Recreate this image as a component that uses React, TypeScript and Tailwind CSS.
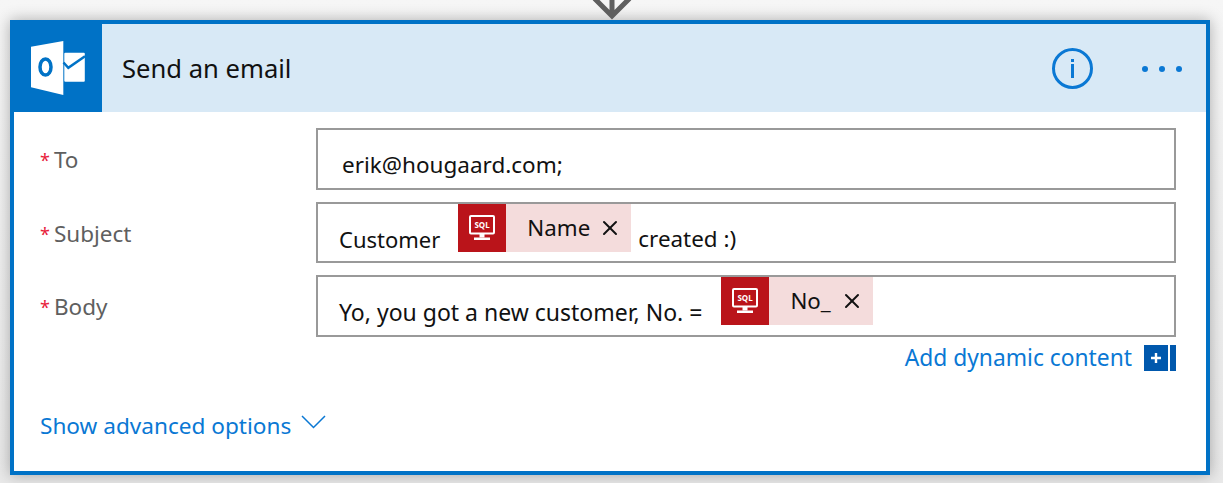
import { X } from "lucide-react";

const font = "font-['Noto_Sans','Open_Sans',sans-serif]";

function SqlIcon() {
  return (
    <div className="w-12 h-12 bg-[#ba141a] flex items-center justify-center shrink-0">
      <svg width="28" height="26" viewBox="0 0 28 26" fill="none">
        <rect x="2" y="1" width="24" height="17.5" rx="1" stroke="white" strokeWidth="2" />
        <text x="14" y="13" textAnchor="middle" fontSize="8" fontWeight="700" fill="white" fontFamily="Noto Sans">SQL</text>
        <rect x="11.5" y="19" width="5" height="3.5" fill="white" />
        <rect x="6" y="22.5" width="16" height="2.5" fill="white" />
      </svg>
    </div>
  );
}

function Token({ label, width }: { label: string; width: string }) {
  return (
    <span className={`inline-flex items-center h-12 bg-[#f4dcdc] ${width}`}>
      <SqlIcon />
      <span className="pl-[21px] text-[22.3px] text-[#111]">{label}</span>
      <X className="ml-auto mr-[9px] w-6 h-6 text-[#111]" strokeWidth={2} />
    </span>
  );
}

function Label({ text }: { text: string }) {
  return (
    <div className="w-[302px] shrink-0 pl-[26px] pt-[16px] flex text-[22.5px] leading-[32px] text-[#5f5f5f]">
      <span className="text-[#e8213a] text-[18px] mr-[4px]">*</span>
      {text}
    </div>
  );
}

export default function App() {
  return (
    <div className={`w-[1223px] h-[483px] overflow-hidden bg-gradient-to-b from-[#f6f6f6] to-[#e9e9e9] ${font}`}>
      <div className="h-5 flex justify-center">
        <svg width="44" height="20" viewBox="0 0 44 20" fill="none">
          <path d="M22 -2V16M4.5 -1.5L22 16L39.5 -1.5" stroke="#5f5f5f" strokeWidth="5" />
        </svg>
      </div>
      <div className="mx-[10px] w-[1200px] h-[455px] border-4 border-[#0072c6] bg-white shadow-[0_0_14px_rgba(0,0,0,0.3)] flex flex-col">
        {/* Header */}
        <div className="h-[88px] flex items-center bg-[#d8e9f6] shrink-0">
          <div className="w-[88px] h-[88px] bg-[#0072c6] flex items-center justify-center">
            <svg width="54" height="54" viewBox="0 0 54 54">
              <path d="M0 5.7L32.3 0V54L0 46.3Z" fill="white" />
              <ellipse cx="14.5" cy="26" rx="5.5" ry="8" fill="none" stroke="#0072c6" strokeWidth="3.5" />
              <rect x="33.3" y="11.7" width="20.5" height="29" rx="1" fill="white" />
              <path d="M32.5 21.5L37.3 26.8L54 15.2" fill="none" stroke="#0072c6" strokeWidth="2.5" />
            </svg>
          </div>
          <div className="ml-5 text-[25.6px] text-[#111] pt-[3px]">Send an email</div>
          <div className="ml-auto mr-[49px] w-[41px] h-[41px] rounded-full border-[3px] border-[#0a78d4] flex items-center justify-center">
            <div className="flex flex-col items-center gap-[2px]">
              <div className="w-[3px] h-[3px] bg-[#0a78d4]" />
              <div className="w-[3px] h-[14px] bg-[#0a78d4]" />
            </div>
          </div>
          <div className="mr-[24px] mt-[1px] flex gap-[11px]">
            <div className="w-[6px] h-[6px] rounded-full bg-[#0a78d4]" />
            <div className="w-[6px] h-[6px] rounded-full bg-[#0a78d4]" />
            <div className="w-[6px] h-[6px] rounded-full bg-[#0a78d4]" />
          </div>
        </div>

        {/* Form */}
        <div className="flex flex-col pt-4 pr-[30px] text-[22px] text-[#111]">
          <div className="flex h-[74px]">
            <Label text="To" />
            <div className="flex-1 h-[62px] border-2 border-[#999] pl-[24px] pt-[17px] leading-[36px] text-[22.5px]">erik@hougaard.com;</div>
          </div>
          <div className="flex h-[73px]">
            <Label text="Subject" />
            <div className="flex-1 h-[61px] border-2 border-[#999] flex items-start pl-[21px]">
              <span className="mt-[17px] leading-[36px] mr-[18px]">Customer</span>
              <Token label="Name" width="w-[173px]" />
              <span className="mt-[17px] leading-[36px] ml-[7px] text-[22.4px]">created :)</span>
            </div>
          </div>
          <div className="flex h-[62px]">
            <Label text="Body" />
            <div className="flex-1 h-[62px] border-2 border-[#999] flex items-start pl-[21px]">
              <span className="mt-[17px] leading-[36px] mr-[19px] text-[23px]">Yo, you got a new customer, No. =</span>
              <Token label="No_" width="w-[152px]" />
            </div>
          </div>
          <div className="flex justify-end items-center h-[26px] mt-[8px] text-[#0a78d4]">
            <span className="text-[22.8px]">Add dynamic content</span>
            <div className="ml-[12px] w-6 h-[26px] bg-[#0058ad] flex items-center justify-center">
              <svg width="10" height="10" viewBox="0 0 10 10">
                <path d="M5 0V10M0 5H10" stroke="white" strokeWidth="2.4" />
              </svg>
            </div>
            <div className="ml-[2px] w-[6px] h-[26px] bg-[#0058ad]" />
          </div>
        </div>

        <div className="flex items-start pl-[26px] mt-[39px] text-[22.6px] text-[#0a78d4] leading-[32px]">
          Show advanced options
          <svg className="ml-[10px] mt-[5px]" width="26" height="16" viewBox="0 0 26 16" fill="none">
            <path d="M1 1L12.5 12.5L24 1" stroke="#0a78d4" strokeWidth="1.5" />
          </svg>
        </div>
      </div>
    </div>
  );
}
